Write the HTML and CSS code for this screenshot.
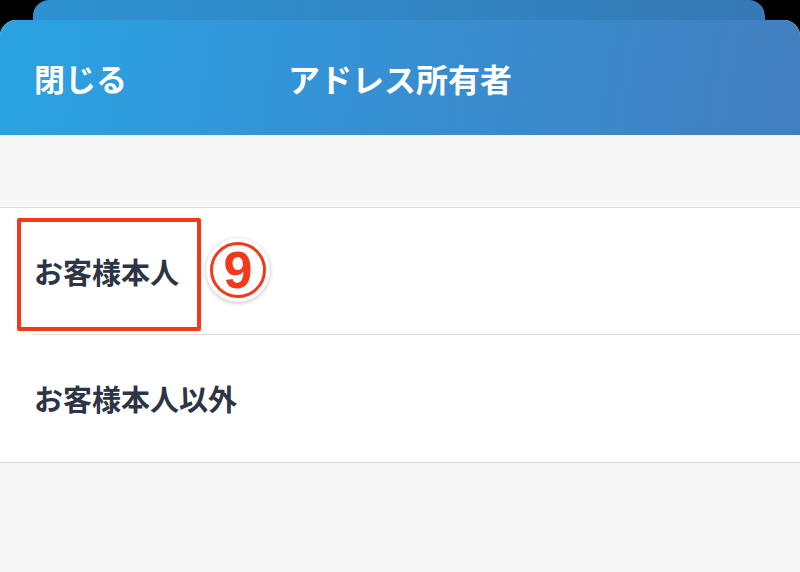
FILE: index.html
```html
<!DOCTYPE html>
<html lang="ja">
<head>
    <meta charset="UTF-8">
    <meta name="viewport" content="width=device-width, initial-scale=1.0">
    <title>アドレス所有者</title>
    <link rel="stylesheet" href="styles.css">
</head>
<body>
    <!-- Stacked sheet behind -->
    <div class="sheet-back"></div>

    <div class="sheet">
        <!-- Header -->
        <div class="header">
            <span class="close">閉じる</span>
            <span class="title">アドレス所有者</span>
            <span></span>
        </div>

        <div class="spacer"></div>

        <!-- Options -->
        <div class="list">
            <div class="row first">
                <span>お客様本人</span>
                <div class="mark-box"></div>
                <div class="step"><span class="step-ring">9</span></div>
            </div>
            <div class="row">
                <span>お客様本人以外</span>
            </div>
        </div>
    </div>
</body>
</html>
```

FILE: styles.css
```css
body {
    margin: 0;
    padding: 0;
    background: #000;
    font-family: 'Noto Sans CJK JP', 'Noto Sans', sans-serif;
    height: 572px;
    overflow: hidden;
}
.sheet-back {
    height: 20px;
    margin: 0 35px 0 33px;
    border-radius: 16px 16px 0 0;
    background: linear-gradient(90deg, #2d92d2, #3679b4);
}
.sheet {
    background: #f7f7f7;
    border-radius: 16px 16px 0 0;
    overflow: hidden;
    height: 552px;
}
.header {
    height: 115px;
    display: grid;
    grid-template-columns: 1fr auto 1fr;
    align-items: center;
    padding: 0 34px;
    background: linear-gradient(100deg, #29a3e3 0%, #3591d4 45%, #427ebf 100%);
    color: #fff;
    font-size: 31px;
}
.close {
    font-weight: 700;
}
.title {
    font-weight: 700;
    font-size: 32px;
}
.spacer {
    height: 72px;
    border-bottom: 1px solid #dcdcdc;
}
.list {
    background: #fff;
    border-bottom: 1px solid #dcdcdc;
}
.row {
    position: relative;
    height: 128px;
    display: flex;
    align-items: center;
    padding-left: 34px;
    font-size: 29px;
    font-weight: 700;
    color: #2c3445;
}
.row.first {
    height: 126px;
}
.row.first::after {
    content: '';
    position: absolute;
    left: 33px;
    right: 0;
    bottom: -1px;
    height: 1px;
    background: #dcdcdc;
}
.mark-box {
    position: absolute;
    left: 17px;
    top: 10px;
    width: 176px;
    height: 105px;
    border: 4px solid #f23a1a;
    border-radius: 2px;
}
.step {
    position: absolute;
    left: 206px;
    top: 30px;
    width: 64px;
    height: 64px;
    border-radius: 50%;
    background: #fff;
    box-shadow: 0 1px 4px rgba(0,0,0,0.25);
    display: flex;
    align-items: center;
    justify-content: center;
}
.step-ring {
    width: 50px;
    height: 50px;
    border: 3px solid #f23a1a;
    border-radius: 50%;
    display: flex;
    align-items: center;
    justify-content: center;
    color: #f23a1a;
    font-family: 'Liberation Sans', Arial, sans-serif;
    font-weight: 700;
    font-size: 52px;
    line-height: 1;
}
```
